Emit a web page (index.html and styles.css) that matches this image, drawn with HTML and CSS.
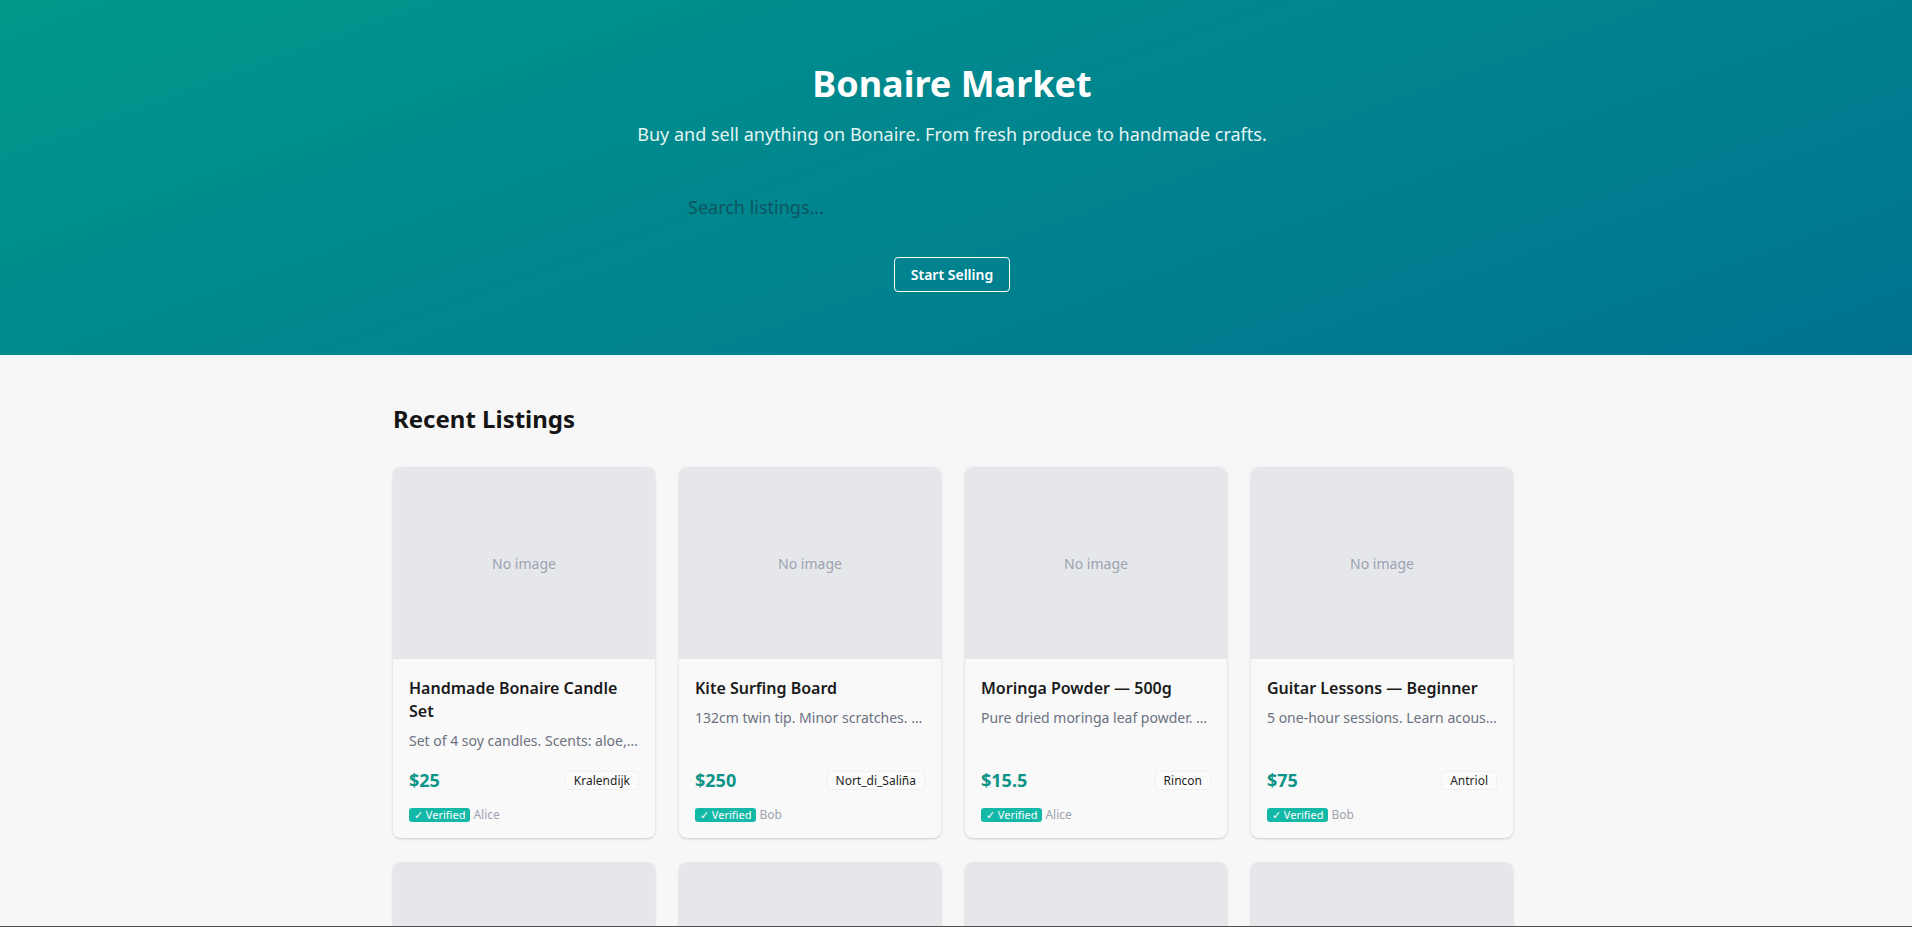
FILE: index.html
```html
<!DOCTYPE html>
<html lang="en">
<head>
<meta charset="utf-8">
<title>Bonaire Market</title>
<link rel="stylesheet" href="styles.css">
</head>
<body>
<header class="hero">
  <h1 class="hero-title">Bonaire Market</h1>
  <p class="hero-sub">Buy and sell anything on Bonaire. From fresh produce to handmade crafts.</p>
  <form class="search">
    <input class="search-input" type="text" placeholder="Search listings...">
  </form>
  <a class="sell-btn" href="#">Start Selling</a>
</header>

<main class="listings">
  <h2 class="section-title">Recent Listings</h2>
  <div class="grid">
    <article class="card">
      <div class="card-img">No image</div>
      <div class="card-body">
        <h3 class="card-title">Handmade Bonaire Candle Set</h3>
        <p class="card-desc">Set of 4 soy candles. Scents: aloe, coconut and sea breeze.</p>
        <div class="card-meta">
          <span class="price">$25</span>
          <span class="loc">Kralendijk</span>
        </div>
        <div class="seller"><span class="verified">✓ Verified</span><span class="seller-name">Alice</span></div>
      </div>
    </article>
    <article class="card">
      <div class="card-img">No image</div>
      <div class="card-body">
        <h3 class="card-title">Kite Surfing Board</h3>
        <p class="card-desc">132cm twin tip. Minor scratches. Includes fins and straps.</p>
        <div class="card-meta">
          <span class="price">$250</span>
          <span class="loc">Nort_di_Saliña</span>
        </div>
        <div class="seller"><span class="verified">✓ Verified</span><span class="seller-name">Bob</span></div>
      </div>
    </article>
    <article class="card">
      <div class="card-img">No image</div>
      <div class="card-body">
        <h3 class="card-title">Moringa Powder — 500g</h3>
        <p class="card-desc">Pure dried moringa leaf powder. Grown locally on Bonaire.</p>
        <div class="card-meta">
          <span class="price">$15.5</span>
          <span class="loc">Rincon</span>
        </div>
        <div class="seller"><span class="verified">✓ Verified</span><span class="seller-name">Alice</span></div>
      </div>
    </article>
    <article class="card">
      <div class="card-img">No image</div>
      <div class="card-body">
        <h3 class="card-title">Guitar Lessons — Beginner</h3>
        <p class="card-desc">5 one-hour sessions. Learn acoustic basics at your own pace.</p>
        <div class="card-meta">
          <span class="price">$75</span>
          <span class="loc">Antriol</span>
        </div>
        <div class="seller"><span class="verified">✓ Verified</span><span class="seller-name">Bob</span></div>
      </div>
    </article>
    <article class="card">
      <div class="card-img">No image</div>
      <div class="card-body">
        <h3 class="card-title">Fresh Papaya Box</h3>
        <p class="card-desc">Ripe papayas picked this week from our garden.</p>
        <div class="card-meta">
          <span class="price">$12</span>
          <span class="loc">Kralendijk</span>
        </div>
        <div class="seller"><span class="verified">✓ Verified</span><span class="seller-name">Alice</span></div>
      </div>
    </article>
    <article class="card">
      <div class="card-img">No image</div>
      <div class="card-body">
        <h3 class="card-title">Snorkel Set</h3>
        <p class="card-desc">Mask, snorkel and fins. Used twice, like new.</p>
        <div class="card-meta">
          <span class="price">$40</span>
          <span class="loc">Rincon</span>
        </div>
        <div class="seller"><span class="verified">✓ Verified</span><span class="seller-name">Bob</span></div>
      </div>
    </article>
    <article class="card">
      <div class="card-img">No image</div>
      <div class="card-body">
        <h3 class="card-title">Driftwood Wall Art</h3>
        <p class="card-desc">Hand-carved driftwood piece collected on the east coast.</p>
        <div class="card-meta">
          <span class="price">$60</span>
          <span class="loc">Antriol</span>
        </div>
        <div class="seller"><span class="verified">✓ Verified</span><span class="seller-name">Alice</span></div>
      </div>
    </article>
    <article class="card">
      <div class="card-img">No image</div>
      <div class="card-body">
        <h3 class="card-title">Bicycle — City Cruiser</h3>
        <p class="card-desc">Single speed, new tires, basket included.</p>
        <div class="card-meta">
          <span class="price">$90</span>
          <span class="loc">Nort_di_Saliña</span>
        </div>
        <div class="seller"><span class="verified">✓ Verified</span><span class="seller-name">Bob</span></div>
      </div>
    </article>
  </div>
</main>
<div class="edge-line"></div>
</body>
</html>
```
FILE: styles.css
```css
* {
  box-sizing: border-box;
}

html, body {
  margin: 0;
  padding: 0;
}

body {
  font-family: "Noto Sans", "Open Sans", "Liberation Sans", sans-serif;
  background: #f7f7f7;
  color: #1a1a1a;
}

.hero {
  background: linear-gradient(160deg, #00978a 0%, #00838f 55%, #00728f 100%);
  color: #fff;
  text-align: center;
  padding: 62px 32px 63px 24px;
  display: flex;
  flex-direction: column;
  align-items: center;
}

.hero-title {
  margin: 0;
  font-size: 36px;
  line-height: 1.2;
  font-weight: 700;
}

.hero-sub {
  margin: 16px 0 0;
  font-size: 18px;
  line-height: 27px;
  color: #e3f4f2;
}

.search {
  margin-top: 35px;
  width: 560px;
}

.search-input {
  width: 100%;
  height: 48px;
  padding: 0 16px;
  border: none;
  background: transparent;
  font-family: inherit;
  font-size: 18px;
  color: #0d4d57;
  outline: none;
}

.search-input::placeholder {
  color: #0e5560;
}

.sell-btn {
  margin-top: 26px;
  display: inline-block;
  padding: 0 16px;
  height: 35px;
  line-height: 33px;
  border: 1px solid #fff;
  border-radius: 4px;
  color: #fff;
  font-size: 14px;
  font-weight: 600;
  text-decoration: none;
}

/* Listings */
.listings {
  width: 1120px;
  margin-left: calc(50% - 563px);
  padding: 48px 0 48px;
}

.section-title {
  margin: 0 0 32px;
  font-size: 24px;
  line-height: 32px;
  font-weight: 700;
  color: #151515;
}

.grid {
  display: grid;
  grid-template-columns: repeat(4, 1fr);
  gap: 24px;
}

.card {
  background: #f9f9f9;
  border-radius: 8px;
  overflow: hidden;
  box-shadow: 0 1px 3px rgba(0, 0, 0, 0.12), 0 1px 2px rgba(0, 0, 0, 0.06);
  display: flex;
  flex-direction: column;
}

.card-img {
  height: 192px;
  background: #e5e7eb;
  color: #9ca3af;
  font-size: 14px;
  display: flex;
  align-items: center;
  justify-content: center;
}

.card-body {
  flex: 1;
  padding: 18px 16px 15px;
  display: flex;
  flex-direction: column;
}

.card-title {
  margin: 0;
  font-size: 16px;
  line-height: 23px;
  font-weight: 600;
  color: #1a1a1a;
}

.card-desc {
  margin: 7px 0 0;
  font-size: 14px;
  line-height: 21px;
  color: #6b7280;
  white-space: nowrap;
  overflow: hidden;
  text-overflow: ellipsis;
}

.card-meta {
  margin-top: auto;
  padding-top: 16px;
  display: flex;
  align-items: center;
  justify-content: space-between;
}

.price {
  font-size: 18px;
  line-height: 27px;
  font-weight: 700;
  color: #0d9488;
}

.loc {
  font-size: 12px;
  line-height: 15px;
  padding: 1px 8px;
  border: 1px solid #f0f0f0;
  border-radius: 4px;
  background: #fbfbfb;
  color: #1f1f1f;
}

.seller {
  margin-top: 13px;
  display: flex;
  align-items: center;
  gap: 3px;
  font-size: 12px;
  line-height: 16px;
}

.verified {
  background: #14b8a6;
  color: #fff;
  font-size: 11px;
  line-height: 14px;
  padding: 0 5px;
  border-radius: 3px;
}

.seller-name {
  color: #9ca3af;
}

.edge-line {
  position: fixed;
  left: 0;
  right: 0;
  bottom: 0;
  height: 1px;
  background: #4f4f4f;
}
```
